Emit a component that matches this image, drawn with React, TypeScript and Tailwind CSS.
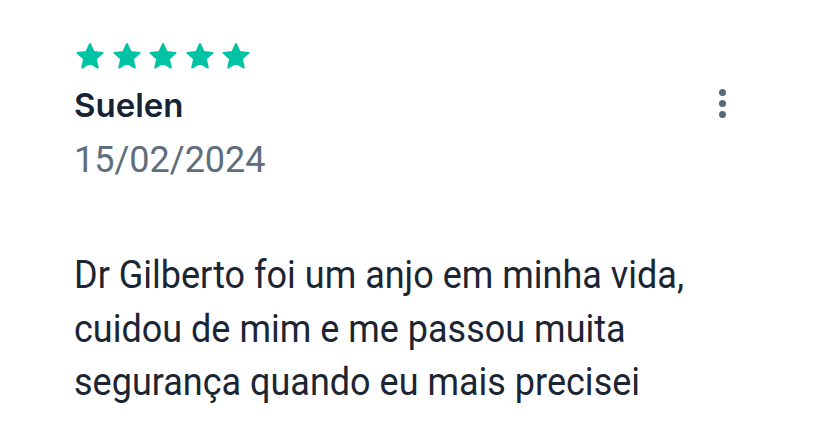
import React from 'react';

const Star: React.FC = () => (
    <svg className="w-[32px] h-[31px]" viewBox="0 0 24 24" fill="#00c2a4">
        <path d="M12 2.2l2.9 6.3 6.9.7-5.2 4.6 1.5 6.8L12 17.1l-6.1 3.5 1.5-6.8-5.2-4.6 6.9-.7z" stroke="#00c2a4" strokeWidth={1.4} strokeLinejoin="round" />
    </svg>
);

const App: React.FC = () => {
    return (
        <div className="w-[818px] h-[434px] bg-white flex flex-col pl-[74px] pr-[92px] pt-[41px]" style={{ fontFamily: 'Roboto, sans-serif' }}>
            <div className="flex items-start justify-between">
                <div className="flex flex-col">
                    {/* Rating */}
                    <div className="flex gap-[4.5px]">
                        <Star />
                        <Star />
                        <Star />
                        <Star />
                        <Star />
                    </div>
                    <h3 className="text-[33px] leading-[40px] font-semibold text-[#172233] mt-[13px] font-['Inter',sans-serif]">Suelen</h3>
                    <p className="text-[36px] leading-[44px] text-[#5e6e7d] mt-[13px]">15/02/2024</p>
                </div>
                <button className="mt-[48px] flex flex-col gap-[4px] p-0">
                    <span className="w-[7px] h-[7px] rounded-full bg-[#56687a]" />
                    <span className="w-[7px] h-[7px] rounded-full bg-[#56687a]" />
                    <span className="w-[7px] h-[7px] rounded-full bg-[#56687a]" />
                </button>
            </div>

            {/* Review text */}
            <p className="mt-[66px] text-[36px] leading-[49px] text-[#1b2533] max-w-[640px] scale-y-[1.1] origin-top-left">
                Dr Gilberto foi um anjo em minha vida, cuidou de mim e me passou muita segurança quando eu mais precisei
            </p>
        </div>
    );
};

export default App;
